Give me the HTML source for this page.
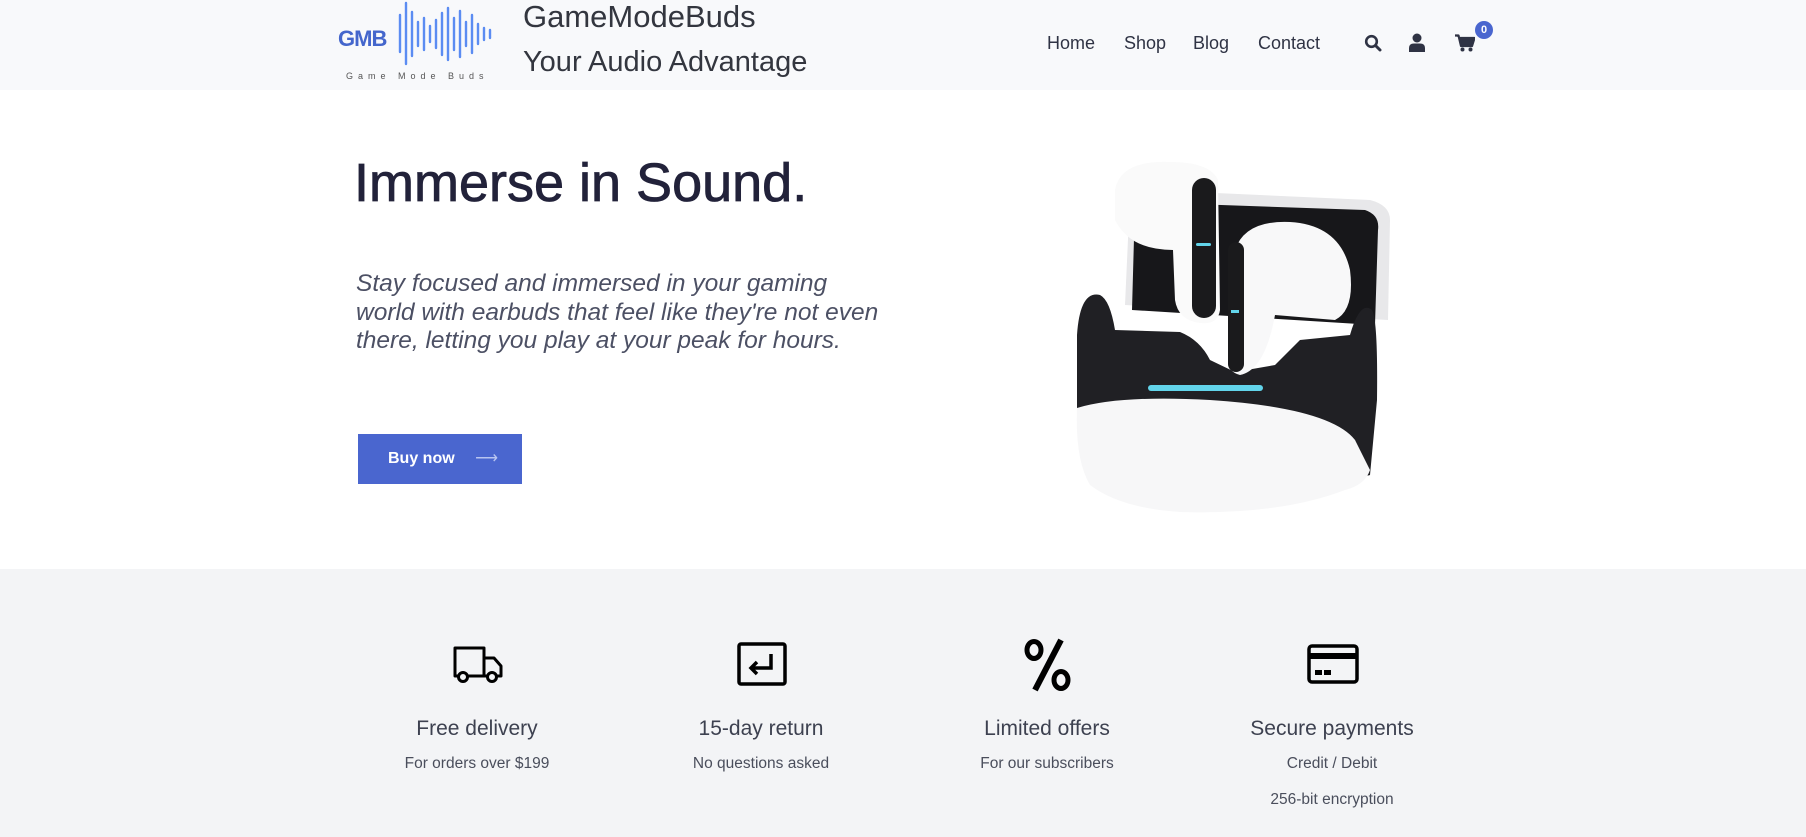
<!DOCTYPE html>
<html><head><meta charset="utf-8"><style>
*{margin:0;padding:0;box-sizing:border-box}
body{width:1806px;height:837px;overflow:hidden;background:#fff;font-family:"Liberation Sans",Roboto,sans-serif;position:relative}
.hdr{position:absolute;left:0;top:0;width:1806px;height:90px;background:#f8f9fb}
.abs{position:absolute}
.nav{position:absolute;top:33px;font-size:18px;color:#2f3344}
.gray{position:absolute;left:0;top:569px;width:1806px;height:268px;background:#f3f4f6}
.col{position:absolute;width:300px;text-align:center;color:#3d4150}
.col h3{font-weight:normal;font-size:21px;margin-top:0;color:#3d4150}
.col p{font-size:15.5px;color:#4a4e5c}
</style></head><body>
<div class="hdr"></div>
<div class="abs" style="left:338px;top:26px;font-size:22px;font-weight:bold;color:#4466cc;letter-spacing:-1px">GMB</div>
<svg class="abs" style="left:398px;top:0" width="102" height="68" viewBox="0 0 102 68">
<g stroke="#5b8cf2" stroke-width="2.4" stroke-linecap="round">
<line x1="2" y1="15" x2="2" y2="52"/><line x1="8" y1="3" x2="8" y2="64"/><line x1="14" y1="12" x2="14" y2="56"/><line x1="20" y1="22" x2="20" y2="46"/><line x1="26" y1="18" x2="26" y2="50"/><line x1="32" y1="26" x2="32" y2="42"/><line x1="38" y1="20" x2="38" y2="48"/><line x1="44" y1="13" x2="44" y2="55"/><line x1="50" y1="8" x2="50" y2="60"/><line x1="56" y1="18" x2="56" y2="50"/><line x1="62" y1="11" x2="62" y2="57"/><line x1="68" y1="22" x2="68" y2="46"/><line x1="74" y1="15" x2="74" y2="53"/><line x1="80" y1="24" x2="80" y2="44"/><line x1="86" y1="28" x2="86" y2="40"/><line x1="92" y1="30" x2="92" y2="38"/></g></svg>
<div class="abs" style="left:346px;top:71px;font-size:9px;letter-spacing:5px;color:#555">Game Mode Buds</div>
<div class="abs" style="left:523px;top:-1px;font-size:31px;color:#33363f">GameModeBuds</div>
<div class="abs" style="left:523px;top:46px;font-size:29px;color:#33363f">Your Audio Advantage</div>
<div class="nav" style="left:1047px">Home</div>
<div class="nav" style="left:1124px">Shop</div>
<div class="nav" style="left:1193px">Blog</div>
<div class="nav" style="left:1258px">Contact</div>
<svg class="abs" style="left:1364px;top:34px" width="18" height="18" viewBox="0 0 18 18"><circle cx="7.5" cy="7.5" r="5.3" fill="none" stroke="#2f3344" stroke-width="2.6"/><line x1="11.5" y1="11.5" x2="16" y2="16" stroke="#2f3344" stroke-width="3" stroke-linecap="round"/></svg>
<svg class="abs" style="left:1409px;top:33px" width="16" height="19" viewBox="0 0 16 19"><circle cx="8" cy="5" r="4.5" fill="#2f3344"/><path d="M0 19 V15 Q0 10.5 5 10.5 H11 Q16 10.5 16 15 V19Z" fill="#2f3344"/></svg>
<svg class="abs" style="left:1455px;top:34px" width="20" height="18" viewBox="0 0 20 18"><path d="M0 1.5 H3.5 L6 12 H17 L19.5 4 H5" fill="#2f3344" stroke="#2f3344" stroke-width="2.2" stroke-linejoin="round"/><circle cx="7.5" cy="15.5" r="2" fill="#2f3344"/><circle cx="15.5" cy="15.5" r="2" fill="#2f3344"/></svg>
<div class="abs" style="left:1475px;top:21px;width:18px;height:18px;border-radius:50%;background:#4a66cf;color:#fff;font-size:11px;font-weight:bold;text-align:center;line-height:18px">0</div>

<div class="abs" style="left:354px;top:152px;font-size:54px;color:#22223a;-webkit-text-stroke:0.8px #22223a">Immerse in Sound.</div>
<div class="abs" style="left:356px;top:270px;width:525px;font-size:24.5px;font-style:italic;color:#4c5064;line-height:28.6px">Stay focused and immersed in your gaming world with earbuds that feel like they're not even there, letting you play at your peak for hours.</div>
<div class="abs" style="left:358px;top:434px;width:164px;height:50px;background:#4a66cf;color:#fff;font-size:16px;font-weight:bold;line-height:50px;padding-left:30px">Buy now <span style="font-weight:normal;margin-left:16px;color:#b8c4f0">⟶</span></div>

<svg class="abs" style="left:1060px;top:140px" width="350" height="390" viewBox="0 0 350 390">
<path d="M65 165 L70 55 Q72 48 90 50 L310 60 Q330 65 330 80 L328 180 Z" fill="#e8e8ea"/>
<path d="M72 170 L75 62 L305 70 Q320 75 318 90 L315 185 Z" fill="#17171a"/>
<path d="M17 195 Q20 150 40 155 Q50 160 55 190 L120 192 Q140 200 150 220 L175 232 L215 225 L240 200 L290 195 Q300 160 312 170 Q318 180 317 260 L310 335 Q300 340 295 300 Q200 265 100 262 Q40 260 17 270 Z" fill="#202024"/>
<path d="M17 268 Q60 255 150 260 Q270 268 295 300 Q305 320 310 330 Q305 345 285 350 Q220 375 120 372 Q60 368 30 345 Q15 320 17 268 Z" fill="#f7f7f8"/>
<rect x="88" y="245" width="115" height="6" rx="3" fill="#62d4ea"/>
<path d="M55 50 Q60 20 110 22 Q150 22 158 40 L160 170 Q158 185 140 183 Q118 180 115 160 L113 110 Q70 110 55 80 Z" fill="#fafafa"/>
<rect x="132" y="38" width="24" height="140" rx="12" fill="#1a1a1c"/>
<rect x="136" y="103" width="15" height="3" rx="1.5" fill="#62d4ea"/>
<path d="M175 110 Q185 80 230 82 Q280 85 290 130 Q295 170 275 180 L215 175 Q205 230 180 235 Q168 232 168 220 Z" fill="#f8f8f9"/>
<rect x="168" y="102" width="16" height="130" rx="8" fill="#1a1a1c"/>
<rect x="171" y="170" width="8" height="3" fill="#62d4ea"/>
</svg>

<div class="gray"></div>
<svg class="abs" style="left:452px;top:644px" width="52" height="40" viewBox="0 0 52 40"><path d="M3 4 H32 V32 H3 Z M32 14 H42 L49 22 V32 H32" fill="none" stroke="#000" stroke-width="3" stroke-linejoin="round"/><circle cx="11" cy="33" r="4.5" fill="#f3f4f6" stroke="#000" stroke-width="3"/><circle cx="40" cy="33" r="4.5" fill="#f3f4f6" stroke="#000" stroke-width="3"/></svg>
<svg class="abs" style="left:737px;top:642px" width="50" height="44" viewBox="0 0 50 44"><rect x="2" y="2" width="46" height="40" rx="2" fill="none" stroke="#000" stroke-width="3.5"/><path d="M34 12 V26 H14 M20 20 L14 26 L20 32" fill="none" stroke="#000" stroke-width="3.5"/></svg>
<svg class="abs" style="left:1023px;top:638px" width="50" height="54" viewBox="0 0 50 54"><ellipse cx="11" cy="12" rx="7" ry="8.5" fill="none" stroke="#000" stroke-width="5"/><ellipse cx="38" cy="42" rx="7" ry="8.5" fill="none" stroke="#000" stroke-width="5"/><line x1="38" y1="2" x2="12" y2="52" stroke="#000" stroke-width="6"/></svg>
<svg class="abs" style="left:1307px;top:644px" width="52" height="40" viewBox="0 0 52 40"><rect x="2" y="2" width="48" height="36" rx="3" fill="none" stroke="#000" stroke-width="3.5"/><rect x="2" y="9" width="48" height="6" fill="#000"/><rect x="8" y="26" width="7" height="5" fill="#000"/><rect x="17" y="26" width="7" height="5" fill="#000"/></svg>
<div class="col" style="left:327px;top:717px"><h3>Free delivery</h3><p style="margin-top:14px">For orders over $199</p></div>
<div class="col" style="left:611px;top:717px"><h3>15-day return</h3><p style="margin-top:14px">No questions asked</p></div>
<div class="col" style="left:897px;top:717px"><h3>Limited offers</h3><p style="margin-top:14px">For our subscribers</p></div>
<div class="col" style="left:1182px;top:717px"><h3>Secure payments</h3><p style="margin-top:14px">Credit / Debit</p><p style="margin-top:18px">256-bit encryption</p></div>
</body></html>
